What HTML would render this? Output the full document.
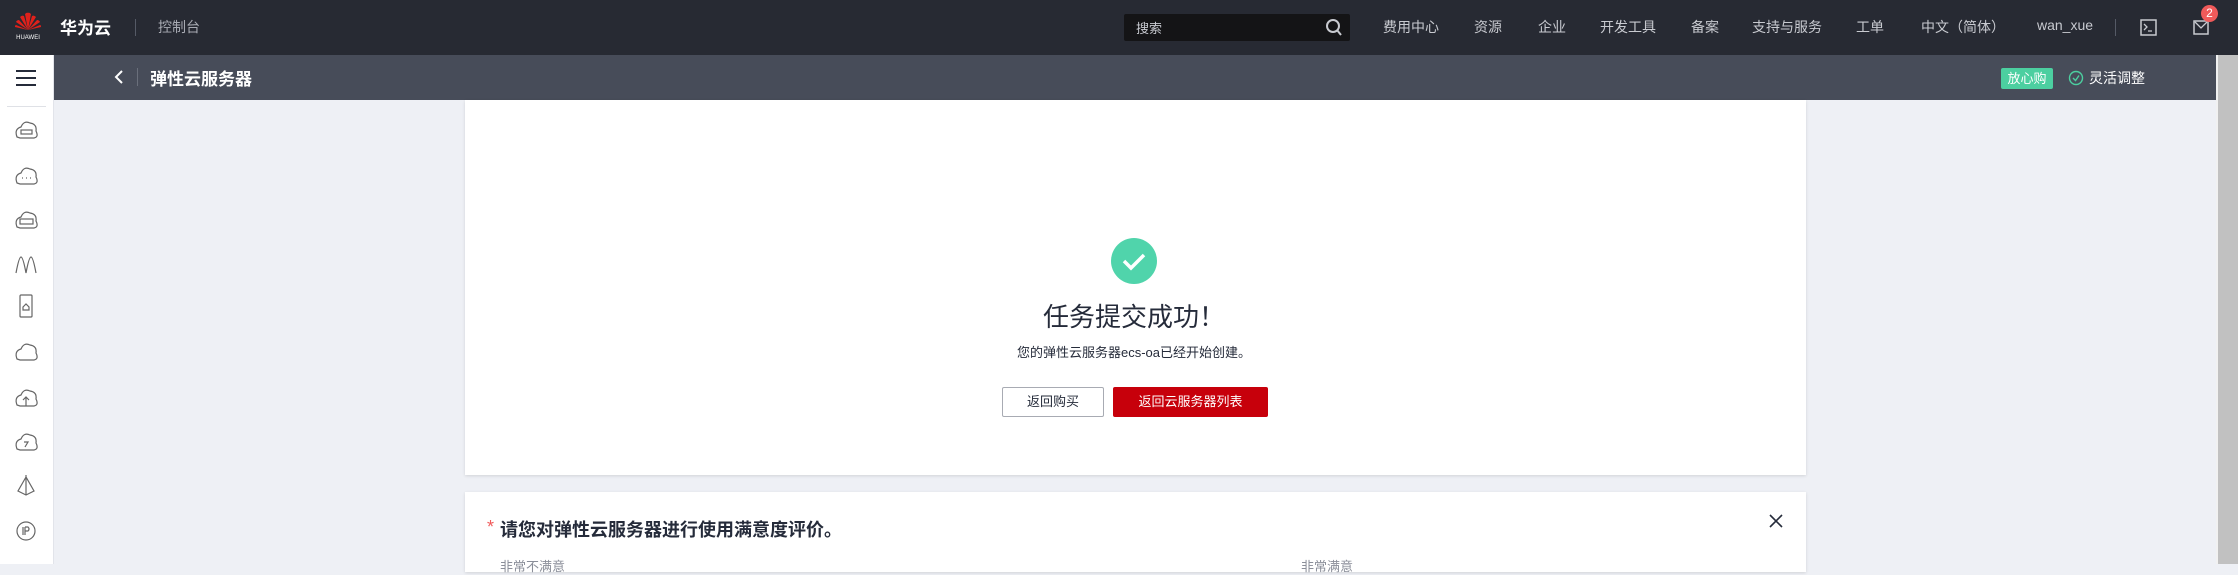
<!DOCTYPE html>
<html><head><meta charset="utf-8"><style>
*{margin:0;padding:0;box-sizing:border-box}
body{width:2238px;height:564px;overflow:hidden;background:#eef0f5;font-family:"Liberation Sans","Noto Sans CJK SC",sans-serif;position:relative}
.a{position:absolute}
.top{left:0;top:0;width:2238px;height:55px;background:#272a33}
.sub{left:54px;top:55px;width:2162px;height:45px;background:#474c59}
.side{left:0;top:55px;width:54px;height:509px;background:#fff;border-right:1px solid #e2e4ea}
.nav{color:#c8cad0;font-size:14px;top:17px;white-space:nowrap}
.card{background:#fff;box-shadow:0 1px 3px rgba(0,0,0,.12)}
</style></head><body>
<div class="a top"></div>
<svg class="a" style="left:14px;top:10px" width="28" height="30" viewBox="0 0 28 30">
<g fill="#e0211b"><path d="M14 20 L11 4 Q13 2 14 3Z"/><path d="M14 20 L17 4 Q15 2 14 3Z"/><path d="M14 20 L6 7 Q8 5 10 6Z"/><path d="M14 20 L22 7 Q20 5 18 6Z"/><path d="M14 20 L2 12 Q3 10 5 10Z"/><path d="M14 20 L26 12 Q25 10 23 10Z"/><path d="M14 20 L1 17 Q1 15 2 15Z"/><path d="M14 20 L27 17 Q27 15 26 15Z"/></g>
<text x="14" y="29" font-size="6" fill="#fff" text-anchor="middle" font-family="Liberation Sans">HUAWEI</text></svg>
<div class="a" style="left:60px;top:14px;color:#fff;font-size:17px;font-weight:bold">华为云</div>
<div class="a" style="left:135px;top:19px;width:1px;height:17px;background:#555a66"></div>
<div class="a" style="left:158px;top:17px;color:#a8abb3;font-size:14px">控制台</div>
<div class="a" style="left:1124px;top:14px;width:226px;height:27px;background:#141416;border-radius:2px"></div>
<div class="a" style="left:1136px;top:18px;color:#c8cad0;font-size:13px">搜索</div>
<svg class="a" style="left:1325px;top:18px" width="18" height="19"><circle cx="8" cy="8" r="6" stroke="#c8cad0" stroke-width="2" fill="none"/><path d="M12 12 L16 17" stroke="#c8cad0" stroke-width="2"/></svg>
<div class="a nav" style="left:1383px">费用中心</div>
<div class="a nav" style="left:1474px">资源</div>
<div class="a nav" style="left:1538px">企业</div>
<div class="a nav" style="left:1600px">开发工具</div>
<div class="a nav" style="left:1691px">备案</div>
<div class="a nav" style="left:1752px">支持与服务</div>
<div class="a nav" style="left:1856px">工单</div>
<div class="a nav" style="left:1921px">中文（简体）</div>
<div class="a nav" style="left:2037px">wan_xue</div>
<div class="a" style="left:2115px;top:19px;width:1px;height:17px;background:#555a66"></div>
<svg class="a" style="left:2140px;top:19px" width="18" height="18"><rect x="1" y="1" width="15" height="15" fill="none" stroke="#c8cad0" stroke-width="1.5"/><path d="M4 5 L7 8 L4 11 M8 12 H12" stroke="#c8cad0" stroke-width="1.3" fill="none"/></svg>
<svg class="a" style="left:2193px;top:19px" width="18" height="18"><rect x="1" y="2" width="14" height="13" fill="none" stroke="#c8cad0" stroke-width="1.5"/><path d="M2 3 L8 9 L14 3" stroke="#c8cad0" stroke-width="1.3" fill="none"/></svg>
<div class="a" style="left:2201px;top:5px;width:17px;height:17px;border-radius:50%;background:#f05a5a;color:#fff;font-size:12px;text-align:center;line-height:17px">2</div>

<div class="a sub"></div>
<svg class="a" style="left:113px;top:69px" width="12" height="16"><path d="M9 2 L3 8 L9 14" stroke="#fff" stroke-width="2" fill="none"/></svg>
<div class="a" style="left:137px;top:68px;width:1px;height:18px;background:#6a6f7b"></div>
<div class="a" style="left:150px;top:65px;color:#fff;font-size:17px;font-weight:bold">弹性云服务器</div>
<div class="a" style="left:2001px;top:68px;width:52px;height:21px;background:#4ccfa0;color:#fff;font-size:13px;text-align:center;line-height:21px;border-radius:2px">放心购</div>
<svg class="a" style="left:2068px;top:70px" width="16" height="16"><circle cx="8" cy="8" r="6.5" stroke="#4ccfa0" stroke-width="1.4" fill="none"/><path d="M5 8 L7.5 10.5 L11 5.5" stroke="#4ccfa0" stroke-width="1.4" fill="none"/></svg>
<div class="a" style="left:2089px;top:68px;color:#fff;font-size:14px">灵活调整</div>

<div class="a" style="left:2216px;top:55px;width:22px;height:509px;background:#f1f1f1"></div>
<div class="a" style="left:2218px;top:55px;width:20px;height:509px;background:#c1c1c1"></div>

<div class="a side"></div>
<div class="a" style="left:16px;top:70px;width:20px;height:2px;background:#252b3a;box-shadow:0 7px 0 #252b3a,0 14px 0 #252b3a"></div>
<div class="a" style="left:7px;top:106px;width:39px;height:1px;background:#dfe1e6"></div>
<svg class="a" style="left:12px;top:117px" width="30" height="430" fill="none" stroke="#666" stroke-width="1.2">
<g><path d="M5 20 Q2 12 9 10 Q12 3 18 6 Q25 7 24 14 Q27 20 22 21 H8Z"/><rect x="9" y="13" width="11" height="4"/></g>
<g transform="translate(0,46)"><path d="M5 20 Q2 12 9 10 Q12 3 18 6 Q25 7 24 14 Q27 20 22 21 H8Z"/><path d="M10 15h1M14 15h1M18 15h1"/></g>
<g transform="translate(0,90)"><path d="M5 20 Q2 12 9 10 Q12 3 18 6 Q25 7 24 14 Q27 20 22 21 H8Z"/><rect x="8" y="12" width="13" height="5"/></g>
<g transform="translate(0,134)"><path d="M4 22 Q7 6 9 6 Q11 6 14 22 Q17 6 19 6 Q21 6 24 22"/></g>
<g transform="translate(0,176)"><rect x="8" y="2" width="12" height="22" rx="1"/><path d="M11 14 L14 11 L17 14 V17 H11Z"/></g>
<g transform="translate(0,222)"><path d="M5 20 Q2 12 9 10 Q12 3 18 6 Q25 7 24 14 Q27 20 22 21 H8Z"/></g>
<g transform="translate(0,268)"><path d="M5 20 Q2 12 9 10 Q12 3 18 6 Q25 7 24 14 Q27 20 22 21 H8Z"/><path d="M14 21 V12 M11 15 L14 12 L17 15"/></g>
<g transform="translate(0,312)"><path d="M5 20 Q2 12 9 10 Q12 3 18 6 Q25 7 24 14 Q27 20 22 21 H8Z"/><path d="M12 13 H16 L13 18"/></g>
<g transform="translate(0,356)"><path d="M14 2 V22 M14 4 L6 18 L14 22 L22 18 Z"/></g>
<g transform="translate(0,400)"><circle cx="14" cy="14" r="9"/><path d="M11 10 V18 M13 10 V18 M13 10 H16 Q18 12 16 14 H13"/></g>
</svg>

<div class="a card" style="left:465px;top:100px;width:1341px;height:375px"></div>
<svg class="a" style="left:1111px;top:238px" width="46" height="46"><circle cx="23" cy="23" r="23" fill="#50d4ab"/><path d="M13 23 L20 30 L33 17" stroke="#fff" stroke-width="3.5" fill="none"/></svg>
<div class="a" style="left:934px;top:297px;width:400px;text-align:center;color:#252b3a;font-size:26px">任务提交成功！</div>
<div class="a" style="left:934px;top:342px;width:400px;text-align:center;color:#252b3a;font-size:13px">您的弹性云服务器ecs-oa已经开始创建。</div>
<div class="a" style="left:1002px;top:387px;width:102px;height:30px;border:1px solid #a8abb3;border-radius:2px;text-align:center;line-height:28px;font-size:13px;color:#252b3a">返回购买</div>
<div class="a" style="left:1113px;top:387px;width:155px;height:30px;background:#c7000b;border-radius:2px;text-align:center;line-height:30px;font-size:13px;color:#fff">返回云服务器列表</div>

<div class="a card" style="left:465px;top:492px;width:1341px;height:80px"></div>
<div class="a" style="left:487px;top:517px;color:#f05a5a;font-size:18px">*</div>
<div class="a" style="left:500px;top:516px;color:#252b3a;font-size:18px;font-weight:bold">请您对弹性云服务器进行使用满意度评价。</div>
<svg class="a" style="left:1769px;top:514px" width="14" height="14"><path d="M1 1 L13 13 M13 1 L1 13" stroke="#252b3a" stroke-width="1.6"/></svg>
<div class="a" style="left:500px;top:556px;color:#8a8e99;font-size:13px">非常不满意</div>
<div class="a" style="left:1301px;top:556px;color:#8a8e99;font-size:13px">非常满意</div>
</body></html>
